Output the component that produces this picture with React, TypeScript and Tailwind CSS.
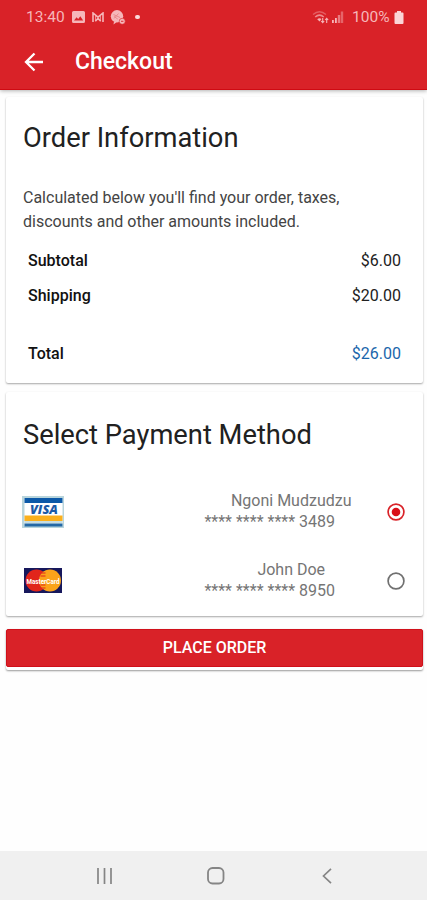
import { useState } from "react"

const totals = [
  { label: "Subtotal", value: "$6.00" },
  { label: "Shipping", value: "$20.00" },
]

const cards = [
  { id: "3489", brand: "visa", name: "Ngoni Mudzudzu", number: "3489" },
  { id: "8950", brand: "mastercard", name: "John Doe", number: "8950" },
]

function StatusBar() {
  return (
    <div className="flex h-[34px] items-center justify-between pl-[26px] pr-[23px] text-[#f6b6b9]">
      <div className="flex items-center">
        <span className="w-[46px] pt-[2px] text-[15.5px] leading-none">13:40</span>
        <svg width="13" height="12" viewBox="0 0 13 12" fill="currentColor">
          <path
            fillRule="evenodd"
            d="M1.5 0h10A1.5 1.5 0 0 1 13 1.5v9a1.5 1.5 0 0 1-1.5 1.5h-10A1.5 1.5 0 0 1 0 10.5v-9A1.5 1.5 0 0 1 1.5 0zM2 9.500h9.200L8.300 5.300 6.200 8 4.600 6.200z"
          />
        </svg>
        <svg className="ml-[7px]" width="12" height="10" viewBox="0 0 12 10" fill="none" stroke="currentColor" strokeWidth="1.6">
          <path d="M1 10V1l5 4.200L11 1v9M3.300 9.200 6 6.500l2.700 2.700" />
          <path d="M3.600 3.500V9M8.400 3.500V9" strokeWidth="0.8" />
        </svg>
        <svg className="ml-[6px]" width="16" height="15" viewBox="0 0 16 15">
          <circle cx="7" cy="6.3" r="6.2" fill="currentColor" />
          <circle cx="12.2" cy="11.3" r="3" fill="currentColor" stroke="#d92228" strokeWidth="0.6" />
          <path d="M3.500 4.500l6.500 3M4 8.500l4.500-5M3.800 6.300l4 2.800" stroke="#e88588" strokeWidth="0.9" />
          <path d="M4 11.500l-.5 3 3-2.200z" fill="currentColor" />
          <path d="M11 11.300h2.400" stroke="#d92228" strokeWidth="0.9" />
        </svg>
        <span className="ml-[9px] size-[4.5px] rounded-full bg-[#fbd9da]"></span>
      </div>
      <div className="flex items-center">
        <svg width="17" height="14" viewBox="0 0 17 14" fill="none" stroke="currentColor">
          <path d="M1 4.500Q7.500-1 14 4.500" strokeWidth="1.3" opacity="0.4" />
          <path d="M3.200 7Q7.500 3.300 11.800 7" strokeWidth="1.5" opacity="0.7" />
          <path d="M5.200 9.200Q7.500 7.300 9.500 9L7.600 11.500z" fill="currentColor" stroke="none" />
          <path d="M10.700 8v4.500M9.200 11l1.500 1.700 1.500-1.700M14.700 13V8.500M13.200 10l1.500-1.700L16.200 10" strokeWidth="1.1" />
        </svg>
        <svg className="ml-[3px]" width="12" height="12" viewBox="0 0 12 12" fill="currentColor">
          <rect x="0" y="9" width="1.8" height="3" />
          <rect x="3" y="7" width="1.8" height="5" />
          <rect x="5.800" y="4" width="2.4" height="8" opacity="0.6" />
          <rect x="8.800" y="0.500" width="2.4" height="11.5" opacity="0.45" />
        </svg>
        <span className="ml-[8px] w-[39px] whitespace-nowrap pt-[2px] text-[15.5px] leading-none">100%</span>
        <svg className="ml-[3px]" width="10" height="13" viewBox="0 0 10 13" fill="#fbd5d7">
          <path d="M3 0h4v1.500h1.500Q9.500 1.500 9.500 2.500V12q0 1-1 1h-7q-1 0-1-1V2.500q0-1 1-1H3z" />
        </svg>
      </div>
    </div>
  )
}

function VisaLogo() {
  return (
    <svg width="42" height="32" viewBox="0 0 42 32">
      <rect width="42" height="32" fill="#b9d5dc" />
      <rect x="2.5" y="2" width="38" height="28" fill="#fff" />
      <rect x="2.5" y="2" width="38" height="5" fill="#0c59a8" />
      <rect x="2.5" y="19.5" width="38" height="5.5" fill="#fbb01d" />
      <rect x="2.5" y="25" width="38" height="2.5" fill="#c5dde2" />
      <rect x="2.5" y="27.5" width="38" height="3" fill="#2368a5" />
      <text
        x="8"
        y="18"
        fontFamily="Open Sans"
        fontSize="13"
        fontWeight="800"
        fontStyle="italic"
        fill="#1c5aa6"
        textLength="28"
        lengthAdjust="spacingAndGlyphs"
      >
        VISA
      </text>
    </svg>
  )
}

function MastercardLogo() {
  return (
    <svg className="ml-[2px] overflow-visible" width="38" height="25" viewBox="0 0 38 25">
      <rect width="38" height="25" fill="#17185c" />
      <circle cx="12.500" cy="12.5" r="11" fill="#e1251b" />
      <circle cx="26" cy="12.5" r="11" fill="#fba31a" />
      <path d="M17.500 5h4M16.500 8h5M16.500 17h5M17.500 20h4" stroke="#e1251b" strokeWidth="1" />
      <text
        x="2.500"
        y="15.5"
        fontFamily="Roboto"
        fontSize="8"
        fontWeight="700"
        fill="#fff"
        textLength="33"
        lengthAdjust="spacingAndGlyphs"
      >
        MasterCard
      </text>
    </svg>
  )
}

export default function App() {
  const [selected, setSelected] = useState("3489")

  return (
    <div className="flex h-[900px] w-[427px] flex-col overflow-hidden bg-[#fefefe] font-['Roboto',sans-serif] text-[#212121]">
      <header className="h-[90px] shrink-0 border-b border-[#cf0a12] bg-[#d92228] shadow-[0_1px_4px_rgba(0,0,0,0.3)]">
        <StatusBar />
        <div className="flex h-[55px] items-center pl-[24px] text-white">
          <svg width="20" height="20" viewBox="0 0 20 20" fill="none" stroke="currentColor" strokeWidth="2.3">
            <path d="M19 10H2.500M10.500 1.500 2 10l8.500 8.500" />
          </svg>
          <h1 className="ml-[31px] text-[23px] font-medium leading-none">Checkout</h1>
        </div>
      </header>

      <main className="flex-1 pl-[6px] pr-[4px] pt-[7px]">
        <section className="h-[286px] rounded-[2px] bg-white pl-[17px] pr-[22px] pt-[25px] shadow-[0_1px_2px_rgba(0,0,0,0.35)]">
          <h2 className="text-[27.3px] leading-[32px]">Order Information</h2>
          <p className="mt-[32px] whitespace-nowrap text-[16px] leading-[24px] text-[#444]">
            Calculated below you'll find your order, taxes,
            <br />
            discounts and other amounts included.
          </p>
          <div className="mt-[10px] pl-[5px] text-[16px]">
            {totals.map((row) => (
              <div key={row.label} className="flex h-[34.5px] items-center justify-between">
                <span className="font-medium text-[#111]">{row.label}</span>
                <span>{row.value}</span>
              </div>
            ))}
            <div className="mt-[24px] flex h-[34px] items-center justify-between">
              <span className="font-medium text-[#111]">Total</span>
              <span className="text-[#1b66ab]">$26.00</span>
            </div>
          </div>
        </section>

        <section className="mt-[9px] h-[224px] rounded-[2px] bg-white pl-[16px] pr-[18px] pt-[27px] shadow-[0_1px_2px_rgba(0,0,0,0.35)]">
          <h2 className="ml-[1px] text-[27.3px] leading-[32px]">Select Payment Method</h2>
          <div className="mt-[26px]">
            {cards.map((card) => (
              <button
                key={card.id}
                onClick={() => setSelected(card.id)}
                className="flex h-[69px] w-full items-center"
              >
                <span className="w-[42px]">{card.brand === "visa" ? <VisaLogo /> : <MastercardLogo />}</span>
                <span className="ml-auto mr-[35px] flex flex-col items-center text-[16px] leading-[20.5px] text-[#757575]">
                  <span className={card.brand === "visa" ? "pl-[26px]" : "pl-[43px] pr-[17px]"}>{card.name}</span>
                  <span className="whitespace-nowrap pr-[17px]">**** **** **** {card.number}</span>
                </span>
                <svg width="18" height="18" viewBox="0 0 18 18" fill="none">
                  <circle cx="9" cy="9" r="7.9" stroke={selected === card.id ? "#d92228" : "#707070"} strokeWidth="1.7" />
                  {selected === card.id && <circle cx="9" cy="9" r="4.3" fill="#d90f18" />}
                </svg>
              </button>
            ))}
          </div>
        </section>

        <div className="mt-[13px] h-[41px] rounded-[2px] bg-white shadow-[0_1px_2px_rgba(0,0,0,0.4)]">
          <button className="h-[38px] w-full rounded-[2px] border border-[#d0101a] bg-[#d92228] text-[16px] font-medium text-white">
            PLACE ORDER
          </button>
        </div>
      </main>

      <nav className="flex h-[49px] shrink-0 items-center bg-[#f0f0f0] pl-[96px] text-[#858585]">
        <svg width="17" height="16" viewBox="0 0 17 16" fill="none" stroke="currentColor" strokeWidth="1.7">
          <path d="M2 0v16M8.500 0v16M15 0v16" />
        </svg>
        <svg className="ml-[94px]" width="18" height="18" viewBox="0 0 18 18" fill="none" stroke="currentColor" strokeWidth="1.8">
          <rect x="1" y="1" width="15.5" height="15.5" rx="4.5" />
        </svg>
        <svg className="ml-[97px]" width="10" height="16" viewBox="0 0 10 16" fill="none" stroke="currentColor" strokeWidth="1.7">
          <path d="M9 .8 1.500 8 9 15.200" />
        </svg>
      </nav>
    </div>
  )
}
